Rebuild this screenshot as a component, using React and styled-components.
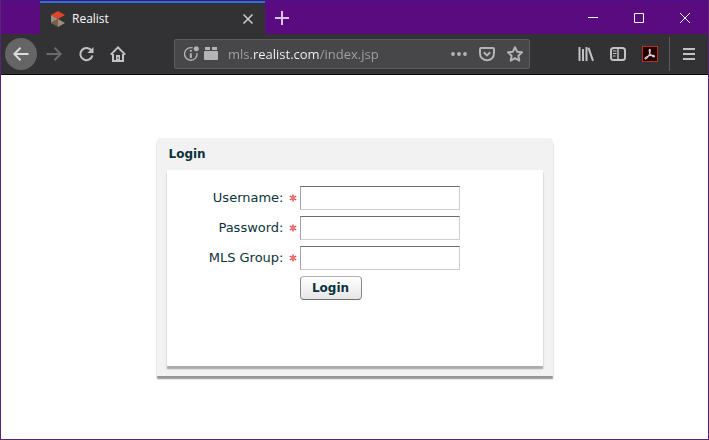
import React from 'react'
import styled, {createGlobalStyle} from 'styled-components'

const fields = [
    {id: 'username', label: 'Username:', type: 'text'},
    {id: 'password', label: 'Password:', type: 'password'},
    {id: 'mlsGroup', label: 'MLS Group:', type: 'text'},
]

const App = () => {
    return(
        <Window>
            <GlobalStyle/>
            <TitleBar>
                <Tab>
                    <RealistLogo/>
                    <TabTitle>Realist</TabTitle>
                    <TabButton aria-label="Close tab">
                        <svg width="16" height="16" viewBox="0 0 16 16">
                            <path d="M3.5 3.5l9 9M12.5 3.5l-9 9" stroke="#c8c8c8" strokeWidth="1.6"/>
                        </svg>
                    </TabButton>
                </Tab>
                <NewTabButton aria-label="New tab">
                    <svg width="16" height="16" viewBox="0 0 16 16">
                        <path d="M8 1v14M1 8h14" stroke="#d9c3e6" strokeWidth="2"/>
                    </svg>
                </NewTabButton>
                <WindowButtons>
                    <WindowButton aria-label="Minimize">
                        <svg width="12" height="12" viewBox="0 0 12 12">
                            <path d="M1 5.5h10" stroke="#fff"/>
                        </svg>
                    </WindowButton>
                    <WindowButton aria-label="Maximize">
                        <svg width="12" height="12" viewBox="0 0 12 12">
                            <path d="M1.5 1.5h9v9h-9z" fill="none" stroke="#fff"/>
                        </svg>
                    </WindowButton>
                    <WindowButton aria-label="Close">
                        <svg width="12" height="12" viewBox="0 0 12 12">
                            <path d="M1 1l10 10M11 1l-10 10" stroke="#fff"/>
                        </svg>
                    </WindowButton>
                </WindowButtons>
            </TitleBar>

            <Toolbar>
                <BackButton aria-label="Back">
                    <Icon>
                        <path d="M15.5 8H1.5M7.5 1.8L1.3 8l6.2 6.2"/>
                    </Icon>
                </BackButton>
                <ToolButton aria-label="Forward" $color="#6b6b6d">
                    <Icon>
                        <path d="M.5 8h14M8.5 1.8L14.7 8l-6.2 6.2"/>
                    </Icon>
                </ToolButton>
                <ToolButton aria-label="Reload">
                    <Icon>
                        <path d="M13.6 4.8A6.1 6.1 0 1 0 14.4 9.5"/>
                        <path d="M15.5 1v6h-6z" fill="currentColor" stroke="none"/>
                    </Icon>
                </ToolButton>
                <ToolButton aria-label="Home">
                    <Icon>
                        <path d="M.8 8.6L8 1.4l7.2 7.2M3 8v7h10V8"/>
                        <path d="M6 15V9h4v6z" fill="currentColor" stroke="none"/>
                        <path d="M8 11v2" stroke="#323234" strokeWidth="1"/>
                    </Icon>
                </ToolButton>

                <UrlBar>
                    <UrlButton aria-label="Site information">
                        <Icon>
                            <path d="M9.8 2A6.3 6.3 0 1 0 14 7" strokeWidth="1.3"/>
                            <path d="M7.8 7.2v4.8" strokeWidth="2"/>
                            <circle cx="7.8" cy="4.8" r="1.1" fill="currentColor" stroke="none"/>
                            <circle cx="13.3" cy="2.8" r="2.5" fill="currentColor" stroke="none"/>
                        </Icon>
                    </UrlButton>
                    <UrlButton aria-label="Permissions">
                        <Icon>
                            <g fill="currentColor" stroke="none">
                                <path d="M2 1h5v3H2zM9 1h5v3H9z"/>
                                <rect x="1" y="5" width="14" height="9" rx="1"/>
                            </g>
                        </Icon>
                    </UrlButton>
                    <UrlInput aria-label="Address" defaultValue="mls.realist.com/index.jsp" spellCheck="false"/>
                    <PageActions>
                        <UrlButton aria-label="Page actions">
                            <Icon>
                                <g fill="currentColor" stroke="none">
                                    <circle cx="2" cy="8" r="1.9"/>
                                    <circle cx="8" cy="8" r="1.9"/>
                                    <circle cx="14" cy="8" r="1.9"/>
                                </g>
                            </Icon>
                        </UrlButton>
                        <UrlButton aria-label="Save to Pocket">
                            <Icon>
                                <path d="M2 2h12q1 0 1 1v4.5a7 6.8 0 0 1-14 0V3q0-1 1-1z"/>
                                <path d="M4.8 6.3L8 9.4l3.2-3.1"/>
                            </Icon>
                        </UrlButton>
                        <UrlButton aria-label="Bookmark this page">
                            <Icon>
                                <path d="M8 1.2l2.1 4.5 4.9.6-3.6 3.4.9 4.9L8 12.2l-4.3 2.4.9-4.9L1 6.3l4.9-.6z" strokeLinejoin="round"/>
                            </Icon>
                        </UrlButton>
                    </PageActions>
                </UrlBar>

                <ToolButton aria-label="Library">
                    <Icon>
                        <path d="M1.5 1v14M5 3v12M8.5 1v14M10.5 1.8L15 14.8"/>
                    </Icon>
                </ToolButton>
                <ToolButton aria-label="Sidebars">
                    <Icon>
                        <rect x="1" y="2" width="14" height="12" rx="2.5"/>
                        <path d="M8 2v12" strokeWidth="1.5"/>
                        <path d="M3 5h3.5M3 7.5h3.5M3 10h2.5" strokeWidth="1"/>
                    </Icon>
                </ToolButton>
                <ToolButton aria-label="Adobe Acrobat">
                    <Icon>
                        <rect x=".5" y=".5" width="15" height="15" fill="#230000" stroke="#b8301c" strokeWidth="1"/>
                        <path d="M3.2 12.8c-1-.8 1.8-2.6 4.2-3.2s5.4-.2 5.2.9-3.2-.4-4.5-2.6S7 3.2 7.8 3.2s.7 2.2-.5 5-3.2 5.2-4.1 4.6z" stroke="#d8cccc" strokeWidth="1.1"/>
                    </Icon>
                </ToolButton>
                <Separator/>
                <ToolButton aria-label="Open menu">
                    <Icon>
                        <path d="M2 3h12M2 8h12M2 13h12"/>
                    </Icon>
                </ToolButton>
            </Toolbar>

            <Page>
                <LoginPanel>
                    <PanelTitle>Login</PanelTitle>
                    <LoginForm onSubmit={e => e.preventDefault()}>
                        {
                            fields.map(field => (
                                <FormRow key={field.id}>
                                    <FieldLabel htmlFor={field.id}>{field.label}</FieldLabel>
                                    <RequiredMark/>
                                    <FieldInput id={field.id} type={field.type} required/>
                                </FormRow>
                            ))
                        }
                        <FormRow>
                            <LoginButton type="submit">Login</LoginButton>
                        </FormRow>
                    </LoginForm>
                </LoginPanel>
            </Page>
        </Window>
    )
}

const Icon = ({children}) => (
    <svg width="16" height="16" viewBox="0 0 16 16" fill="none" stroke="currentColor" strokeWidth="2">
        {children}
    </svg>
)

const RealistLogo = () => (
    <svg width="16" height="16" viewBox="0 0 16 16">
        <path d="M1 4L8 0l7 4-7 4z" fill="#dd4428"/>
        <path d="M1 4l7 4-7 4z" fill="#a08c7c"/>
        <path d="M1 12l7-4v8z" fill="#75604e"/>
        <path d="M8 8l7 4-7 4z" fill="#a08c7c"/>
    </svg>
)

const RequiredMark = () => (
    <MarkBox>
        <svg width="8" height="8" viewBox="0 0 8 8" aria-hidden="true">
            <path d="M4 .5v7M.8 2l6.4 4M.8 6l6.4-4" stroke="#e04444" strokeWidth="1.4"/>
            <circle cx="4" cy="4" r=".7" fill="#fbe3e3"/>
        </svg>
    </MarkBox>
)

const GlobalStyle = createGlobalStyle`
    *{
        box-sizing: border-box;
    }
    body{
        margin: 0;
        background: #fff;
    }
    svg{
        display: block;
        flex: none;
    }
`;

const Window = styled.div`
    display: flex;
    flex-direction: column;
    min-height: 100vh;
    border: 1px solid #5a2378;
    border-top: 0;
    font-family: "Open Sans", "Noto Sans", sans-serif;
`;

const TitleBar = styled.header`
    display: flex;
    height: 34px;
    padding-left: 39px;
    background: #5a0b80;
    border-top: 1px solid #4a1088;
`;

const Tab = styled.div`
    display: flex;
    align-items: center;
    flex: 0 1 225px;
    padding: 0 9px 0 10px;
    background: #323234;
    border-top: 2px solid #2b74d2;
    color: #f9f9fa;
`;

const TabTitle = styled.span`
    flex: 1;
    margin-left: 6px;
    font-size: 12px;
    line-height: 16px;
`;

const PlainButton = styled.button`
    display: flex;
    align-items: center;
    justify-content: center;
    flex: none;
    padding: 0;
    border: 0;
    background: none;
`;

const TabButton = styled(PlainButton)`
    width: 16px;
    height: 16px;
`;

const NewTabButton = styled(PlainButton)`
    width: 34px;
`;

const WindowButtons = styled.div`
    display: flex;
    margin-left: auto;
`;

const WindowButton = styled(PlainButton)`
    width: 46px;
`;

const Toolbar = styled.nav`
    display: flex;
    align-items: center;
    height: 41px;
    padding: 0 3px 0 4px;
    background: #323234;
    border-bottom: 1px solid #0c0c0d;
`;

const ToolButton = styled(PlainButton)`
    width: 32px;
    height: 32px;
    color: ${props => props.$color || '#c2c2c3'};
`;

const BackButton = styled(ToolButton)`
    margin-right: 1px;
    border-radius: 50%;
    background: #656566;
    color: #dcdcdd;
`;

const UrlBar = styled.div`
    display: flex;
    align-items: center;
    flex: 1;
    min-width: 0;
    height: 30px;
    margin: 0 40px;
    padding: 0 4px 0 6px;
    background: #474749;
    border: 1px solid #5c5c5e;
    border-radius: 2px;
`;

const UrlButton = styled(PlainButton)`
    width: 20px;
    height: 28px;
    color: #b4b4b5;
`;

/* the domain part of the address is brighter than the rest */
const UrlInput = styled.input`
    flex: 1;
    min-width: 0;
    height: 28px;
    margin-left: 7px;
    padding: 0;
    border: 0;
    outline: 0;
    background: linear-gradient(90deg, #a3a3a4 25px, #f9f9fa 25px, #f9f9fa 92px, #a3a3a4 92px);
    background-clip: text;
    color: transparent;
    font-family: inherit;
    font-size: 13px;
`;

const PageActions = styled.div`
    display: flex;
    gap: 8px;
`;

const Separator = styled.div`
    width: 1px;
    height: 34px;
    margin: 0 3px;
    background: #5c5c5e;
`;

const Page = styled.main`
    flex: 1;
    padding: 63px 16px;
    background: #fff;
    color: #0b333c;
    font-family: "DejaVu Sans", Verdana, sans-serif;
`;

const LoginPanel = styled.section`
    max-width: 396px;
    margin: 0 auto;
    padding: 0 10px 10px;
    background: #f2f2f2;
    border-radius: 4px 4px 0 0;
    box-shadow: 0 3px 1px rgba(0,0,0,.22), 0 3px 2px rgba(0,0,0,.25);
`;

const PanelTitle = styled.h1`
    margin: 0;
    padding: 0 2px;
    font-size: 12px;
    line-height: 32px;
`;

const LoginForm = styled.form`
    display: flex;
    flex-direction: column;
    gap: 6px;
    min-height: 196px;
    padding: 16px 0;
    background: #fff;
    box-shadow: 0 3px 1px rgba(0,0,0,.15), 0 3px 2px rgba(0,0,0,.18);
`;

const FormRow = styled.div`
    display: grid;
    grid-template-columns: 117px 16px 160px;
    align-items: center;
`;

const FieldLabel = styled.label`
    text-align: right;
    font-size: 13px;
    line-height: 24px;
`;

const MarkBox = styled.span`
    display: flex;
    justify-content: flex-end;
    padding-right: 3px;
`;

const FieldInput = styled.input`
    width: 100%;
    height: 24px;
    padding: 0 4px;
    border: 1px solid;
    border-color: #6a6c6e #cfcfd1 #cfcfd1 #a0a2a4;
    background: #fff;
    font-family: inherit;
    font-size: 12px;
`;

const LoginButton = styled.button`
    grid-column: 3;
    justify-self: start;
    width: 62px;
    height: 24px;
    padding: 0;
    border: 1px solid;
    border-color: #b0b2b4 #86888a #6a6c6e;
    border-radius: 4px;
    background: linear-gradient(#fff, #e6e6e6);
    color: #0b333c;
    font-family: inherit;
    font-size: 12px;
    font-weight: bold;
`;

export default App
